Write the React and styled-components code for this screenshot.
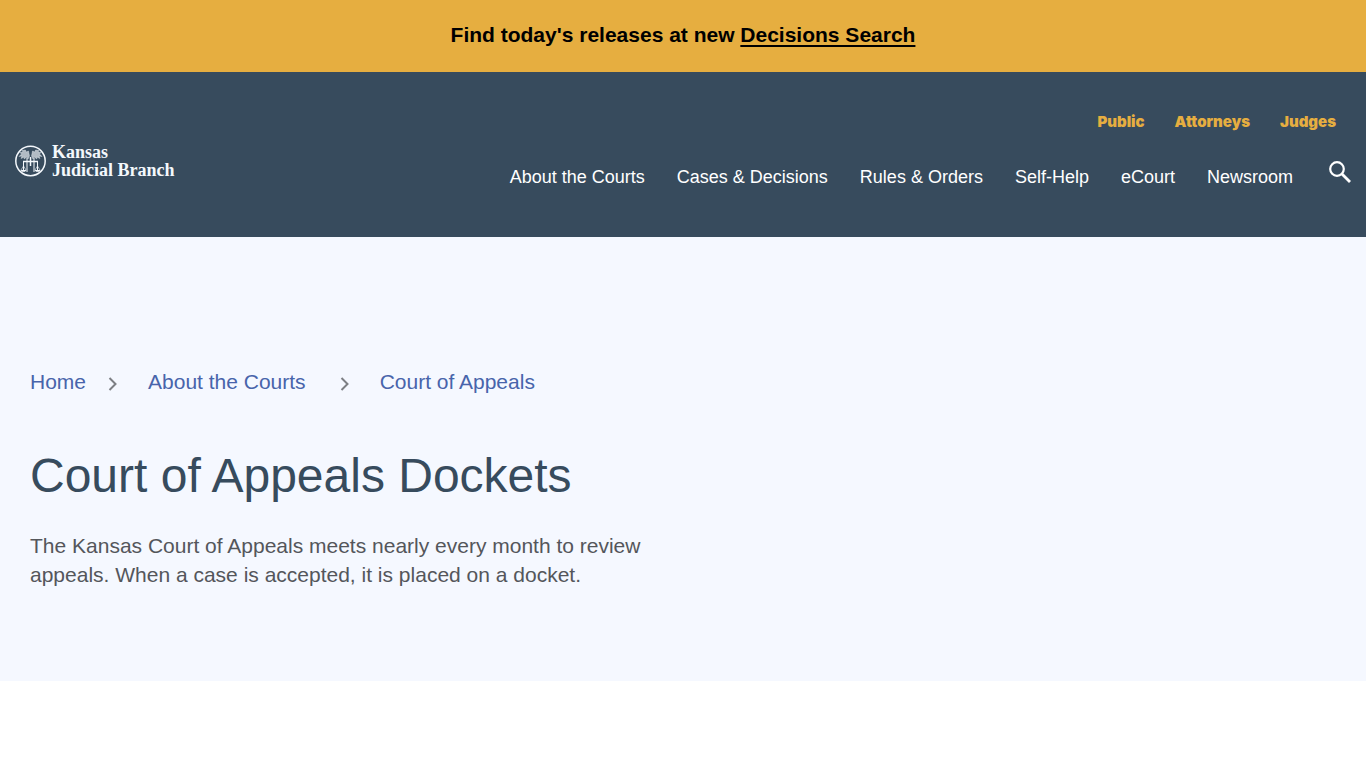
import React from 'react'
import styled, { createGlobalStyle } from 'styled-components'

const colors = {
  gold: '#e6ae40',
  navy: '#374b5d',
  ghost: '#f5f8ff',
  link: '#4864ab',
  text: '#54565b',
  chevron: '#7d7f84',
}

const GlobalStyle = createGlobalStyle`
  *, *::before, *::after {
    box-sizing: border-box;
  }

  body {
    margin: 0;
    background: white;
    color: ${colors.text};
    font-family: 'Liberation Sans', Arial, sans-serif;
  }
`

const Alert = styled.aside`
  padding: 20px 16px 22px;
  background: ${colors.gold};
  color: black;
  font-size: 21px;
  font-weight: 700;
  line-height: 30px;
  text-align: center;

  a {
    color: inherit;
    text-decoration-thickness: 2px;
    text-underline-offset: 3px;
  }
`

const Header = styled.header`
  display: flex;
  justify-content: space-between;
  min-height: 165px;
  padding: 0 15px;
  background: ${colors.navy};
  color: white;
`

const Logo = styled.a`
  display: flex;
  align-items: center;
  gap: 6px;
  align-self: center;
  margin-top: 12px;
  color: #f4f8fc;
  text-decoration: none;
`

const LogoName = styled.span`
  font-family: 'Liberation Serif', 'Times New Roman', serif;
  font-size: 18px;
  font-weight: 700;
  line-height: 18px;
`

const Menus = styled.div`
  display: flex;
  flex-direction: column;
  align-items: flex-end;
  padding-top: 40px;
`

const AudienceNav = styled.nav`
  display: flex;
  gap: 30px;
  padding-right: 15px;

  a {
    color: ${colors.gold};
    font-family: Inter, 'Liberation Sans', sans-serif;
    font-size: 15px;
    font-weight: 900;
    line-height: 20px;
    text-decoration: none;
  }
`

const MainNav = styled.nav`
  display: flex;
  gap: 32px;
  margin-top: 27px;

  a {
    padding-top: 6px;
    color: inherit;
    font-size: 18px;
    line-height: 24px;
    text-decoration: none;
  }
`

const SearchButton = styled.button`
  display: flex;
  margin: 2px 0 0 4px;
  padding: 0;
  border: 0;
  background: none;
  color: inherit;
  cursor: pointer;
`

const Hero = styled.section`
  padding: 130px 30px 92px;
  background: ${colors.ghost};
`

const Breadcrumbs = styled.ol`
  display: flex;
  align-items: center;
  margin: 0;
  padding: 0;
  font-size: 21px;
  line-height: 30px;
  list-style: none;

  a {
    color: ${colors.link};
    text-decoration: none;
  }
`

const Crumb = styled.li`
  display: flex;
  align-items: center;

  svg {
    margin: 4px 30px 0 ${({ $first }) => ($first ? '22px' : '34px')};
  }
`

const Title = styled.h1`
  margin: 49px 0 0;
  color: ${colors.navy};
  font-size: 48px;
  font-weight: 400;
  line-height: 60px;
`

const Intro = styled.p`
  max-width: 640px;
  margin: 25px 0 0;
  font-size: 21px;
  line-height: 29px;
`

const audiences = ['Public', 'Attorneys', 'Judges']

const sections = [
  'About the Courts',
  'Cases & Decisions',
  'Rules & Orders',
  'Self-Help',
  'eCourt',
  'Newsroom',
]

const crumbs = ['Home', 'About the Courts', 'Court of Appeals']

const Seal = () => (
  <svg width="31" height="32" viewBox="0 0 31 32" fill="none" stroke="currentColor" aria-hidden="true">
    <circle cx="15.5" cy="16" r="14.7" strokeWidth="1.5" />
    {/* wheat heads */}
    <g fill="currentColor" fillOpacity="0.65" strokeOpacity="0.6" strokeWidth="0.6">
      <path d="M14.500 11L13.500 6L11 7L10.500 5L7 5.500L8 7L5 7.500L6.500 9L4 11.500L7 11L6 13.500L9.500 12L9 14L12 12L13 14Z" />
      <path d="M16.500 11L17.500 6L20 7L20.500 5L24 5.500L23 7L26 7.500L24.500 9L27 11.500L24 11L25 13.500L21.500 12L22 14L19 12L18 14Z" />
    </g>
    {/* scales */}
    <path d="M15.500 12V21M8 16.500H23" strokeWidth="1.5" />
    <path d="M8.500 16.500V25M22.500 16.500V25M12 13V27M19 13V27" strokeWidth="1" />
    <path d="M8.500 21L6 25M8.500 21L11 25M22.500 21L20 25M22.500 21L25 25" strokeWidth="0.6" />
    <path d="M5.500 25H11.500L10 26.800H7ZM19.500 25H25.500L24 26.800H21Z" fill="currentColor" stroke="none" />
  </svg>
)

const SearchIcon = () => (
  <svg width="22" height="22" viewBox="0 0 22 22" fill="none" stroke="currentColor" strokeWidth="2.200" aria-hidden="true">
    <circle cx="8" cy="8" r="6.800" />
    <path d="M13 13L21 21" strokeWidth="2.800" />
  </svg>
)

const Chevron = () => (
  <svg width="10" height="14" viewBox="0 0 10 14" fill="none" stroke={colors.chevron} strokeWidth="2" aria-hidden="true">
    <path d="M1.500 1L7.500 7L1.500 13" />
  </svg>
)

const App = () => {
  return (
    <>
      <GlobalStyle />
      <Alert>
        Find today's releases at new <a href="#decisions">Decisions Search</a>
      </Alert>
      <Header>
        <Logo href="#home">
          <Seal />
          <LogoName>
            Kansas
            <br />
            Judicial Branch
          </LogoName>
        </Logo>
        <Menus>
          <AudienceNav aria-label="Audience">
            {audiences.map((name) => (
              <a key={name} href="#audience">{name}</a>
            ))}
          </AudienceNav>
          <MainNav aria-label="Main">
            {sections.map((name) => (
              <a key={name} href="#section">{name}</a>
            ))}
            <SearchButton type="button" aria-label="Search">
              <SearchIcon />
            </SearchButton>
          </MainNav>
        </Menus>
      </Header>
      <main>
        <Hero>
          <nav aria-label="Breadcrumb">
            <Breadcrumbs>
              {crumbs.map((name, i) => (
                <Crumb key={name} $first={i === 0}>
                  <a href="#crumb">{name}</a>
                  {i < crumbs.length - 1 && <Chevron />}
                </Crumb>
              ))}
            </Breadcrumbs>
          </nav>
          <Title>Court of Appeals Dockets</Title>
          <Intro>
            The Kansas Court of Appeals meets nearly every month to review appeals. When a case is
            accepted, it is placed on a docket.
          </Intro>
        </Hero>
      </main>
    </>
  )
}

export default App
